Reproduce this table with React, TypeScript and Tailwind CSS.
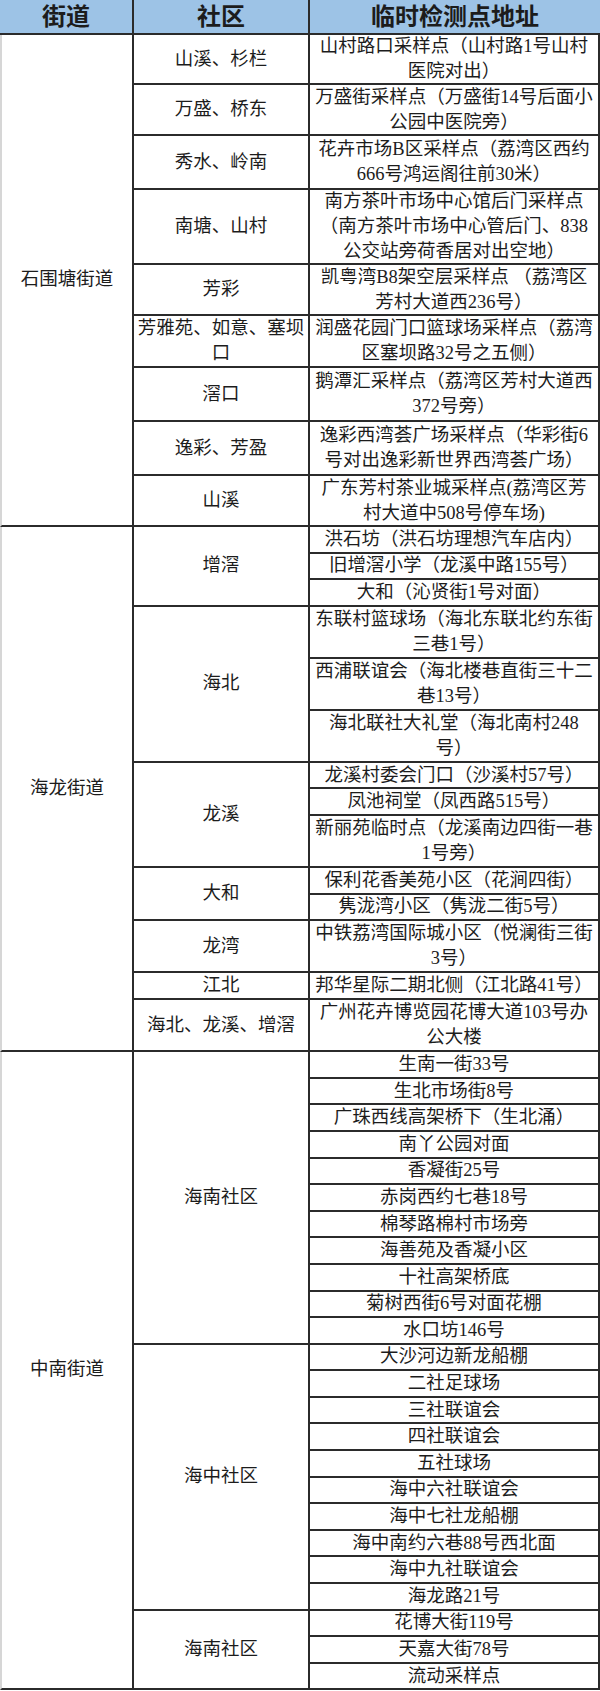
type Addr = { lines: string[]; h: string };
type Group = { name: string[]; addrs: Addr[] };
type Section = { street: string; groups: Group[] };

const one = (t: string): Addr => ({ lines: [t], h: "h-[26.6px]" });

const sections: Section[] = [
  {
    street: "石围塘街道",
    groups: [
      { name: ["山溪、杉栏"], addrs: [{ lines: ["山村路口采样点（山村路1号山村", "医院对出）"], h: "h-[50px]" }] },
      { name: ["万盛、桥东"], addrs: [{ lines: ["万盛街采样点（万盛街14号后面小", "公园中医院旁）"], h: "h-[51px]" }] },
      { name: ["秀水、岭南"], addrs: [{ lines: ["花卉市场B区采样点（荔湾区西约", "666号鸿运阁往前30米）"], h: "h-[54px]" }] },
      {
        name: ["南塘、山村"],
        addrs: [{ lines: ["南方茶叶市场中心馆后门采样点", "（南方茶叶市场中心管后门、838", "公交站旁荷香居对出空地）"], h: "h-[75px]" }],
      },
      { name: ["芳彩"], addrs: [{ lines: ["凯粤湾B8架空层采样点 （荔湾区", "芳村大道西236号）"], h: "h-[51px]" }] },
      { name: ["芳雅苑、如意、塞坝", "口"], addrs: [{ lines: ["润盛花园门口篮球场采样点（荔湾", "区塞坝路32号之五侧）"], h: "h-[52px]" }] },
      { name: ["滘口"], addrs: [{ lines: ["鹅潭汇采样点（荔湾区芳村大道西", "372号旁）"], h: "h-[54px]" }] },
      { name: ["逸彩、芳盈"], addrs: [{ lines: ["逸彩西湾荟广场采样点（华彩街6", "号对出逸彩新世界西湾荟广场）"], h: "h-[54px]" }] },
      { name: ["山溪"], addrs: [{ lines: ["广东芳村茶业城采样点(荔湾区芳", "村大道中508号停车场)"], h: "h-[51px]" }] },
    ],
  },
  {
    street: "海龙街道",
    groups: [
      { name: ["增滘"], addrs: [one("洪石坊（洪石坊理想汽车店内）"), one("旧增滘小学（龙溪中路155号）"), one("大和（沁贤街1号对面）")] },
      {
        name: ["海北"],
        addrs: [
          { lines: ["东联村篮球场（海北东联北约东街", "三巷1号）"], h: "h-[52px]" },
          { lines: ["西浦联谊会（海北楼巷直街三十二", "巷13号）"], h: "h-[52px]" },
          { lines: ["海北联社大礼堂（海北南村248", "号）"], h: "h-[52px]" },
        ],
      },
      {
        name: ["龙溪"],
        addrs: [
          one("龙溪村委会门口（沙溪村57号）"),
          one("凤池祠堂（凤西路515号）"),
          { lines: ["新丽苑临时点（龙溪南边四街一巷", "1号旁）"], h: "h-[52px]" },
        ],
      },
      { name: ["大和"], addrs: [one("保利花香美苑小区（花涧四街）"), one("隽泷湾小区（隽泷二街5号）")] },
      { name: ["龙湾"], addrs: [{ lines: ["中铁荔湾国际城小区（悦澜街三街", "3号）"], h: "h-[52px]" }] },
      { name: ["江北"], addrs: [one("邦华星际二期北侧（江北路41号）")] },
      { name: ["海北、龙溪、增滘"], addrs: [{ lines: ["广州花卉博览园花博大道103号办", "公大楼"], h: "h-[52px]" }] },
    ],
  },
  {
    street: "中南街道",
    groups: [
      {
        name: ["海南社区"],
        addrs: [
          "生南一街33号",
          "生北市场街8号",
          "广珠西线高架桥下（生北涌）",
          "南丫公园对面",
          "香凝街25号",
          "赤岗西约七巷18号",
          "棉琴路棉村市场旁",
          "海善苑及香凝小区",
          "十社高架桥底",
          "菊树西街6号对面花棚",
          "水口坊146号",
        ].map(one),
      },
      {
        name: ["海中社区"],
        addrs: [
          "大沙河边新龙船棚",
          "二社足球场",
          "三社联谊会",
          "四社联谊会",
          "五社球场",
          "海中六社联谊会",
          "海中七社龙船棚",
          "海中南约六巷88号西北面",
          "海中九社联谊会",
          "海龙路21号",
        ].map(one),
      },
      { name: ["海南社区"], addrs: ["花博大街119号", "天嘉大街78号", "流动采样点"].map(one) },
    ],
  },
];

export default function App() {
  return (
    <div className="w-[600px] bg-white text-[#1c1c1c] font-['Liberation_Serif','Noto_Sans_CJK_SC',serif]">
      {/* header */}
      <div className="flex h-[35px] bg-[#9dc3e6] border-b-2 border-[#2b2b2b] text-[24px] font-bold leading-none">
        <div className="w-[134px] border-r-2 border-[#2b2b2b] flex items-center justify-center">街道</div>
        <div className="w-[176px] border-r-2 border-[#2b2b2b] flex items-center justify-center">社区</div>
        <div className="flex-1 flex items-center justify-center">临时检测点地址</div>
      </div>

      {sections.map((sec, si) => (
        <div key={si} className="flex text-[18.5px]">
          <div className="w-[134px] shrink-0 border-l-2 border-l-[#d6d6d6] border-r-2 border-b-2 border-r-[#2b2b2b] border-b-[#2b2b2b] flex items-center justify-center whitespace-nowrap">
            {sec.street}
          </div>
          <div className="flex-1 flex flex-col">
            {sec.groups.map((g, gi) => (
              <div key={gi} className="flex">
                <div className="w-[176px] shrink-0 border-r-2 border-b-2 border-[#2b2b2b] flex flex-col items-center justify-center leading-[25px] whitespace-nowrap">
                  {g.name.map((n, ni) => (
                    <div key={ni}>{n}</div>
                  ))}
                </div>
                <div className="flex-1 flex flex-col">
                  {g.addrs.map((a, ai) => (
                    <div
                      key={ai}
                      className={`${a.h} border-r-2 border-b-2 border-[#2b2b2b] flex flex-col items-center justify-center leading-[25px] whitespace-nowrap`}
                    >
                      {a.lines.map((l, li) => (
                        <div key={li}>{l}</div>
                      ))}
                    </div>
                  ))}
                </div>
              </div>
            ))}
          </div>
        </div>
      ))}
    </div>
  );
}
